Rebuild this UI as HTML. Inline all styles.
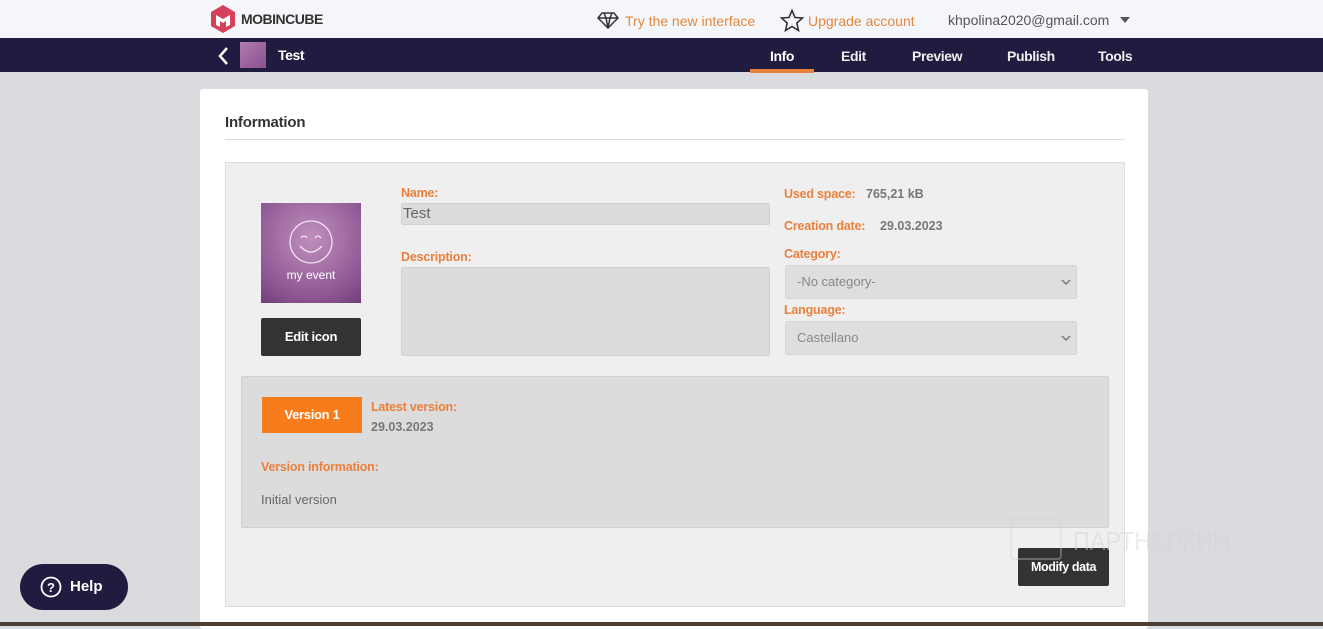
<!DOCTYPE html>
<html><head><style>
*{box-sizing:border-box;margin:0;padding:0}
body{width:1323px;height:626px;overflow:hidden;background:#d9dbdf;font-family:"Liberation Sans",sans-serif;position:relative}
.abs{position:absolute}
.or{color:#e9813c;font-weight:bold;font-size:12.5px;letter-spacing:-0.2px}
.gr{color:#666;font-size:13px}
</style></head><body>
<div class="abs" style="left:0;top:0;width:1323px;height:38px;background:#f4f6fa"></div>
<svg class="abs" style="left:209px;top:4px" width="28" height="30" viewBox="0 0 28 30"><path d="M14 1 L26 8 L26 22 L14 29 L2 22 L2 8Z" fill="#d6405a"/><path d="M7 11 L14 15 L21 11 L21 21 L17 23 L17 17 L14 19 L11 17 L11 23 L7 21Z" fill="#fff"/></svg>
<div class="abs" style="left:241px;top:11px;font-size:14px;font-weight:bold;color:#333;letter-spacing:-0.5px">MOBINCUBE</div>
<svg class="abs" style="left:597px;top:12px" width="22" height="17" viewBox="0 0 22 17"><path d="M5 1 H17 L21 6 L11 16 L1 6Z M1 6 H21 M7 1 L9 6 L11 16 L13 6 L15 1" fill="none" stroke="#333" stroke-width="1.5"/></svg>
<div class="abs" style="left:625px;top:13px;font-size:14px;color:#e3883f">Try the new interface</div>
<svg class="abs" style="left:780px;top:9px" width="24" height="23" viewBox="0 0 24 23"><path d="M12 1.5 L15 8.5 L22.5 9 L16.8 14 L18.5 21.5 L12 17.5 L5.5 21.5 L7.2 14 L1.5 9 L9 8.5Z" fill="none" stroke="#333" stroke-width="1.6"/></svg>
<div class="abs" style="left:808px;top:13px;font-size:14px;color:#e3883f">Upgrade account</div>
<div class="abs" style="left:948px;top:12px;font-size:14px;color:#555">khpolina2020@gmail.com</div>
<div class="abs" style="left:1120px;top:17px;border-left:5px solid transparent;border-right:5px solid transparent;border-top:6px solid #555"></div>

<div class="abs" style="left:0;top:38px;width:1323px;height:34px;background:#1f1c40"></div>
<svg class="abs" style="left:217px;top:46px" width="12" height="20" viewBox="0 0 12 20"><path d="M10 2 L3 10 L10 18" fill="none" stroke="#fff" stroke-width="2.5"/></svg>
<div class="abs" style="left:240px;top:42px;width:26px;height:26px;background:linear-gradient(135deg,#b07bb0,#8a508f)"></div>
<div class="abs" style="left:278px;top:47px;font-size:14px;font-weight:bold;color:#fff;letter-spacing:-0.4px">Test</div>
<div class="abs" style="left:770px;top:48px;font-size:14px;font-weight:bold;color:#fff;letter-spacing:-0.4px">Info</div>
<div class="abs" style="left:750px;top:69px;width:64px;height:4px;background:#e9813c"></div>
<div class="abs" style="left:841px;top:48px;font-size:14px;font-weight:bold;color:#eee;letter-spacing:-0.4px">Edit</div>
<div class="abs" style="left:912px;top:48px;font-size:14px;font-weight:bold;color:#eee;letter-spacing:-0.4px">Preview</div>
<div class="abs" style="left:1007px;top:48px;font-size:14px;font-weight:bold;color:#eee;letter-spacing:-0.4px">Publish</div>
<div class="abs" style="left:1098px;top:48px;font-size:14px;font-weight:bold;color:#eee;letter-spacing:-0.4px">Tools</div>

<div class="abs" style="left:200px;top:89px;width:948px;height:540px;background:#fff;border-radius:3px"></div>
<div class="abs" style="left:225px;top:114px;font-size:15px;font-weight:bold;color:#333;letter-spacing:-0.2px">Information</div>
<div class="abs" style="left:225px;top:139px;width:900px;height:1px;background:#ddd"></div>
<div class="abs" style="left:225px;top:162px;width:900px;height:445px;background:#efefef;border:1px solid #ddd"></div>

<div class="abs" style="left:261px;top:203px;width:100px;height:100px;background:radial-gradient(circle at 50% 35%,#c08fbd,#8b5491 75%,#6f3e78)"></div>
<svg class="abs" style="left:287px;top:218px" width="48" height="48" viewBox="0 0 48 48"><circle cx="24" cy="24" r="21" fill="none" stroke="#f3e6f2" stroke-width="1.3"/><path d="M14 20 Q17 16 20 20 M28 20 Q31 16 34 20 M13 28 Q24 40 35 28" fill="none" stroke="#f3e6f2" stroke-width="1.3"/></svg>
<div class="abs" style="left:261px;top:268px;width:100px;text-align:center;font-size:12px;color:#fff">my event</div>
<div class="abs" style="left:261px;top:318px;width:100px;height:38px;background:#333;border-radius:2px;color:#fff;font-size:13px;font-weight:bold;text-align:center;line-height:38px;letter-spacing:-0.3px">Edit icon</div>

<div class="abs or" style="left:401px;top:186px">Name:</div>
<div class="abs" style="left:401px;top:203px;width:369px;height:22px;background:#dcdcdc;border:1px solid #d2d2d2;border-radius:2px;color:#666;font-size:15px;padding-left:1px;line-height:20px">Test</div>
<div class="abs or" style="left:401px;top:250px">Description:</div>
<div class="abs" style="left:401px;top:267px;width:369px;height:89px;background:#dcdcdc;border:1px solid #d2d2d2;border-radius:2px"></div>

<div class="abs or" style="left:784px;top:187px">Used space:</div>
<div class="abs gr" style="left:866px;top:187px;font-weight:bold;color:#777;font-size:12.5px">765,21 kB</div>
<div class="abs or" style="left:784px;top:219px">Creation date:</div>
<div class="abs gr" style="left:880px;top:219px;font-weight:bold;color:#777;font-size:12.5px">29.03.2023</div>
<div class="abs or" style="left:784px;top:247px">Category:</div>
<div class="abs" style="left:785px;top:265px;width:292px;height:34px;background:#dedede;border:1px solid #d4d4d4;border-radius:3px;font-size:13px;color:#888;padding-left:11px;line-height:32px">-No category-</div>
<div class="abs or" style="left:784px;top:303px">Language:</div>
<div class="abs" style="left:785px;top:321px;width:292px;height:34px;background:#dedede;border:1px solid #d4d4d4;border-radius:3px;font-size:13px;color:#888;padding-left:11px;line-height:32px">Castellano</div>
<svg class="abs" style="left:1061px;top:278px" width="10" height="8"><path d="M1 2 L5 6 L9 2" fill="none" stroke="#777" stroke-width="1.5"/></svg>
<svg class="abs" style="left:1061px;top:334px" width="10" height="8"><path d="M1 2 L5 6 L9 2" fill="none" stroke="#777" stroke-width="1.5"/></svg>

<div class="abs" style="left:241px;top:376px;width:868px;height:152px;background:#dcdcdc;border:1px solid #d0d0d0;border-radius:2px"></div>
<div class="abs" style="left:262px;top:397px;width:100px;height:36px;background:#f87c1c;color:#fff;font-size:13px;font-weight:bold;text-align:center;line-height:36px;letter-spacing:-0.3px">Version 1</div>
<div class="abs or" style="left:371px;top:400px">Latest version:</div>
<div class="abs gr" style="left:371px;top:420px;font-weight:bold;color:#777;font-size:12.5px">29.03.2023</div>
<div class="abs or" style="left:261px;top:460px">Version information:</div>
<div class="abs gr" style="left:261px;top:492px">Initial version</div>

<div class="abs" style="left:1018px;top:548px;width:91px;height:38px;background:#333;border-radius:2px;color:#fff;font-size:12.5px;font-weight:bold;text-align:center;line-height:38px;letter-spacing:-0.4px">Modify data</div>
<div class="abs" style="left:1073px;top:526px;font-size:26px;color:rgba(210,210,210,0.45);letter-spacing:0px;transform:scaleX(0.9);transform-origin:left">ПАРТНЕРКИН</div>
<div class="abs" style="left:1010px;top:518px;width:52px;height:42px;border:2px solid rgba(210,210,210,0.35);border-radius:4px"></div>

<div class="abs" style="left:20px;top:564px;width:108px;height:46px;background:#1f1c40;border-radius:23px"></div>
<svg class="abs" style="left:40px;top:576px" width="22" height="22"><circle cx="11" cy="11" r="9.5" fill="none" stroke="#fff" stroke-width="1.8"/><text x="11" y="16" text-anchor="middle" font-size="13" font-weight="bold" fill="#fff" font-family="Liberation Sans">?</text></svg>
<div class="abs" style="left:70px;top:578px;font-size:15px;font-weight:bold;color:#fff">Help</div>
<div class="abs" style="left:0;top:622px;width:1323px;height:4px;background:#4a3f30"></div>
</body></html>
